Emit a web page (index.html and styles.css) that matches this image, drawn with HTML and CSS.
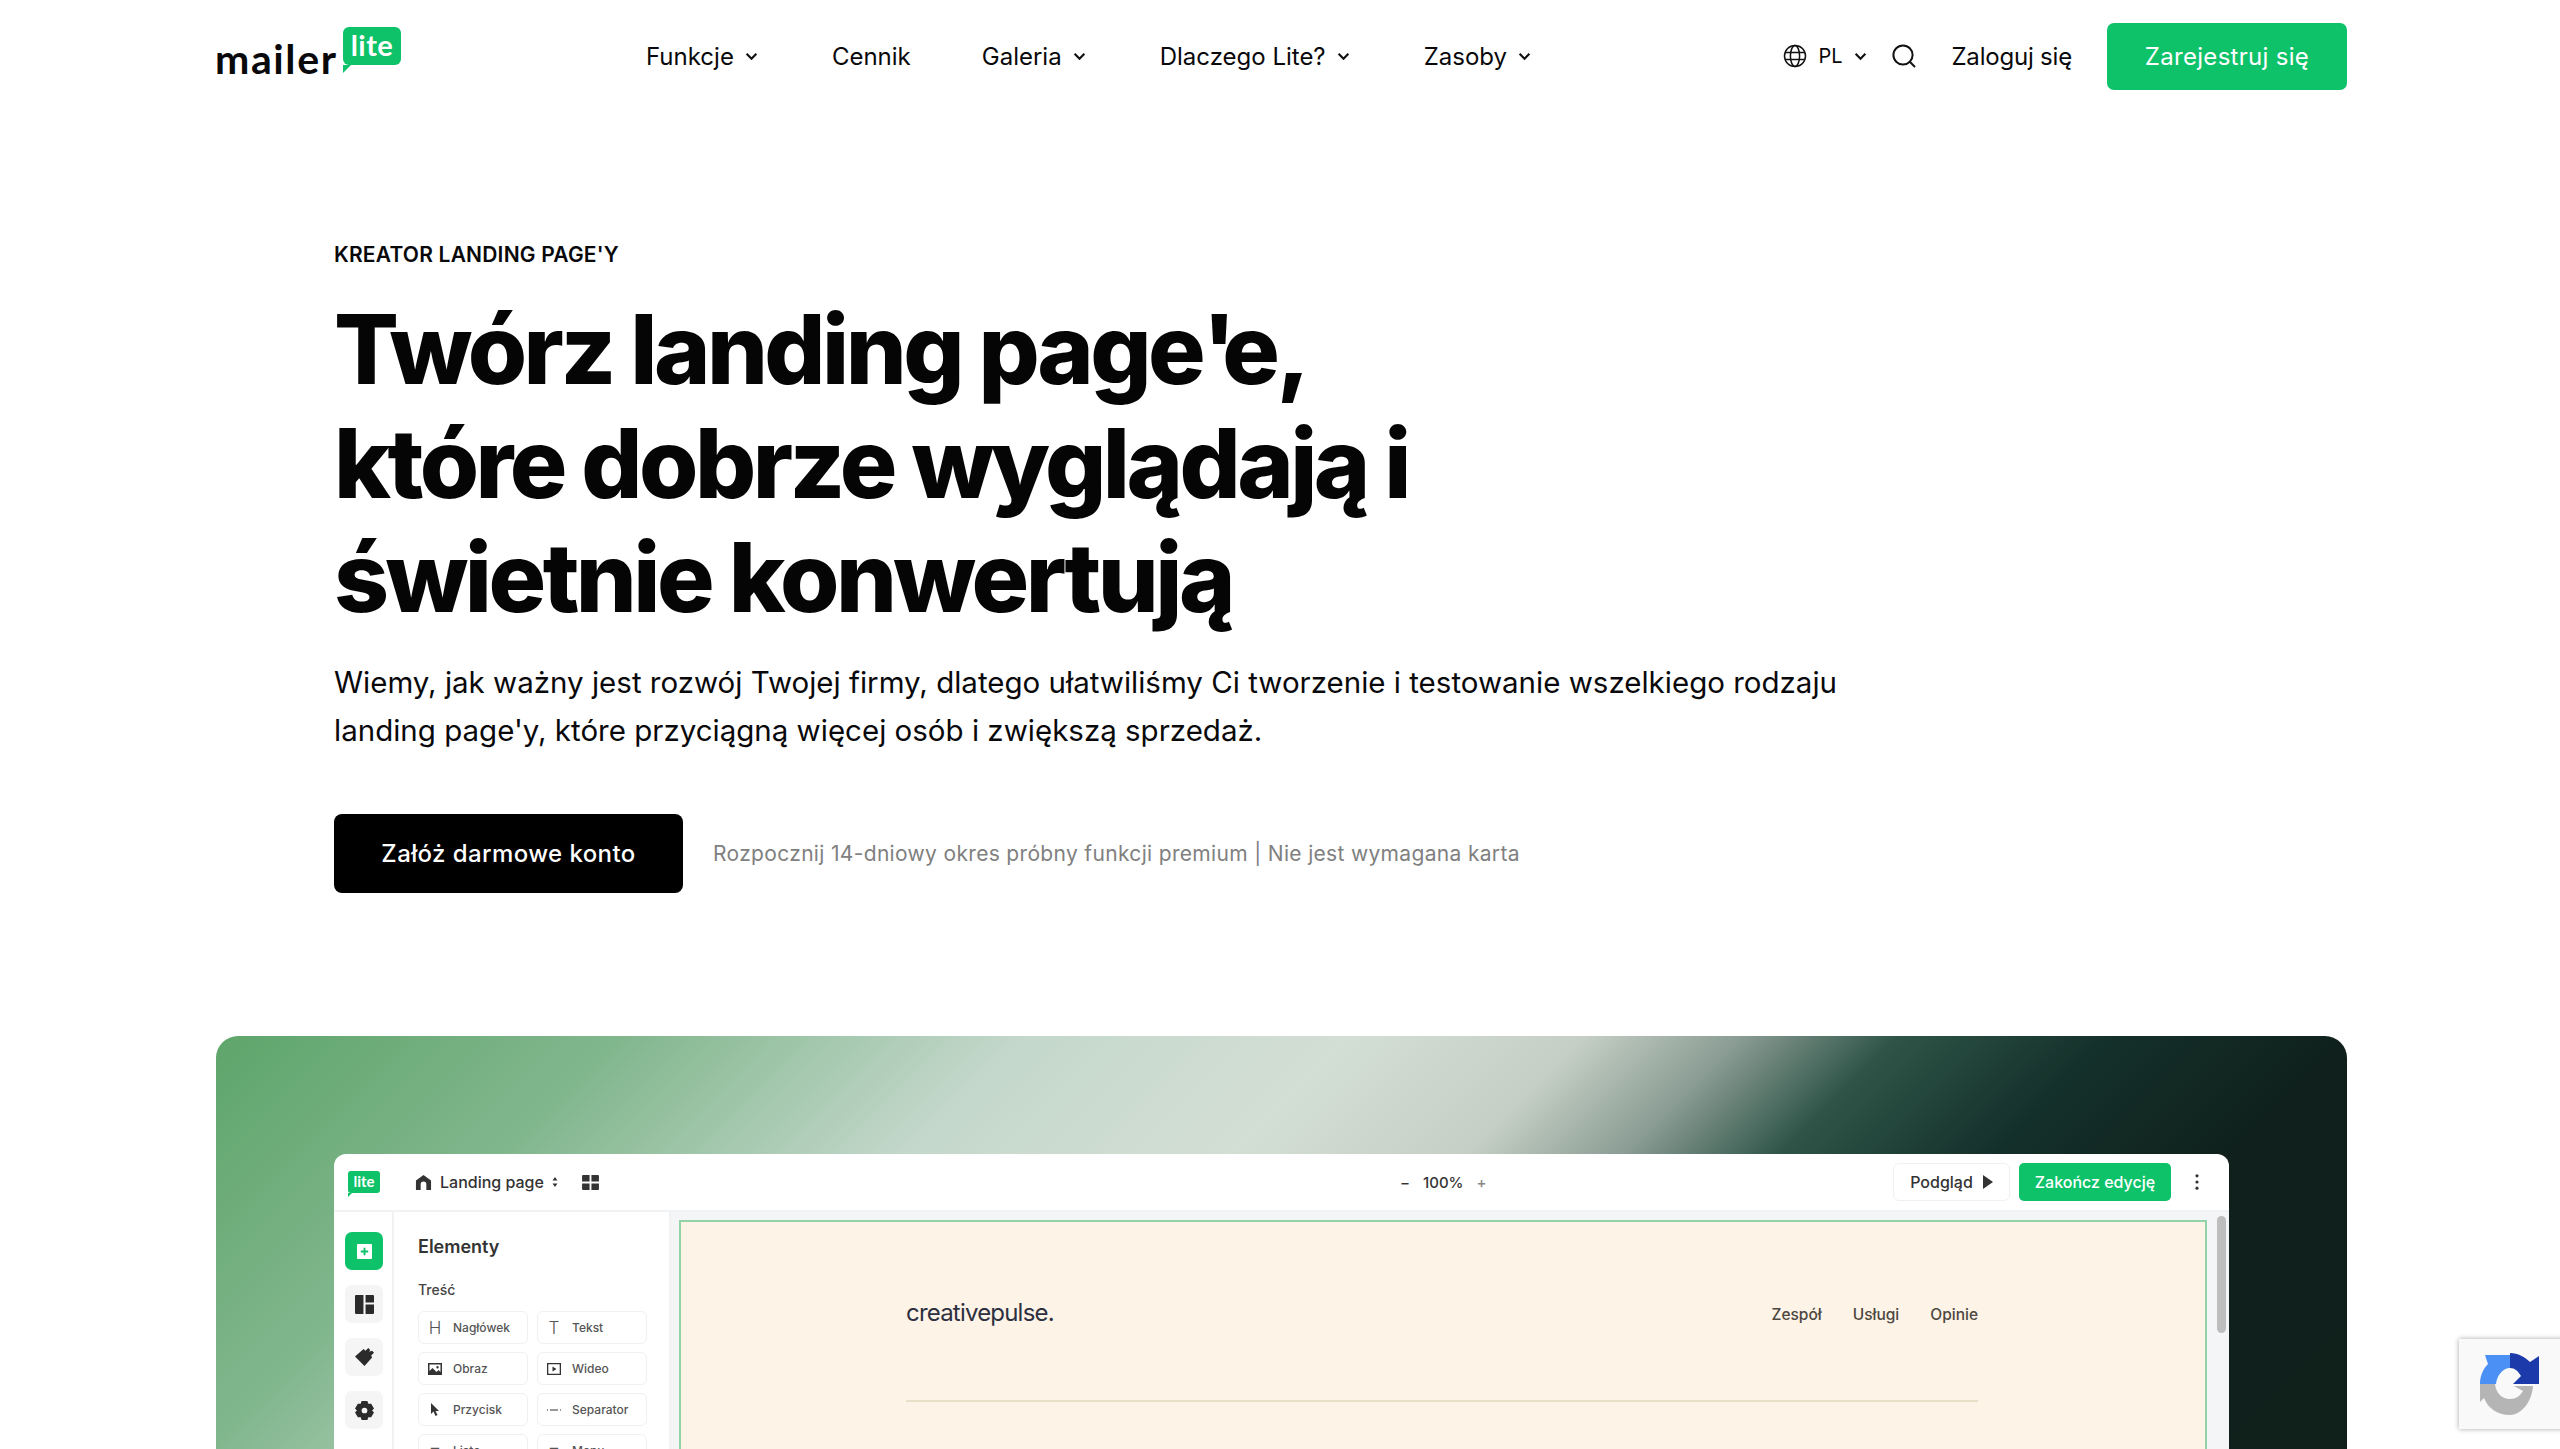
FILE: index.html
```html
<!DOCTYPE html>
<html lang="pl">
<head>
  <meta charset="UTF-8">
  <title>Kreator landing page'y - MailerLite</title>
  <link rel="stylesheet" href="styles.css">
</head>
<body>
  <header class="topbar">
    <a class="logo" href="#">
      <span class="logo-word">mailer</span>
      <span class="logo-bubble">lite</span>
    </a>
    <nav class="main-nav">
      <a class="nav-funkcje" href="#">Funkcje <svg class="chev" viewBox="0 0 12 8"><path d="M1.500 1.500 6 6l4.500-4.500"/></svg></a>
      <a class="nav-cennik" href="#">Cennik</a>
      <a class="nav-galeria" href="#">Galeria <svg class="chev" viewBox="0 0 12 8"><path d="M1.500 1.500 6 6l4.500-4.500"/></svg></a>
      <a class="nav-why" href="#">Dlaczego Lite? <svg class="chev" viewBox="0 0 12 8"><path d="M1.500 1.500 6 6l4.500-4.500"/></svg></a>
      <a href="#">Zasoby <svg class="chev" viewBox="0 0 12 8"><path d="M1.500 1.500 6 6l4.500-4.500"/></svg></a>
    </nav>
    <div class="top-actions">
      <a class="lang" href="#">
        <svg class="globe" viewBox="0 0 24 24"><circle cx="12" cy="12" r="10.500"/><ellipse cx="12" cy="12" rx="4.600" ry="10.500"/><path d="M2 8.500h20M2 15.500h20"/></svg>
        PL
        <svg class="chev" viewBox="0 0 12 8"><path d="M1.500 1.500 6 6l4.500-4.500"/></svg>
      </a>
      <svg class="search" viewBox="0 0 24 24"><circle cx="11" cy="11" r="9.600"/><path d="m18 18 5 5"/></svg>
      <a class="login" href="#">Zaloguj się</a>
      <a class="btn-green" href="#">Zarejestruj się</a>
    </div>
  </header>

  <section class="hero">
    <p class="eyebrow">KREATOR LANDING PAGE'Y</p>
    <h1>Twórz landing page<span class="apos">'</span>e,<br>które dobrze wyglądają i<br>świetnie konwertują</h1>
    <p class="lead">Wiemy, jak ważny jest rozwój Twojej firmy, dlatego ułatwiliśmy Ci tworzenie i testowanie wszelkiego rodzaju<br>landing page'y, które przyciągną więcej osób i zwiększą sprzedaż.</p>
    <div class="cta-row">
      <a class="btn-black" href="#">Załóż darmowe konto</a>
      <span class="cta-note">Rozpocznij 14-dniowy okres próbny funkcji premium | Nie jest wymagana karta</span>
    </div>
  </section>

  <section class="banner">
    <div class="editor">
      <div class="ed-head">
        <div class="ed-left">
          <span class="ed-logo">lite</span>
          <svg class="ed-home" viewBox="0 0 18 18"><path d="M9 1 1 7v10h5v-6a3 3 0 0 1 6 0v6h5V7z"/></svg>
          <span class="ed-title">Landing page</span>
          <svg class="ed-sort" viewBox="0 0 6 12"><path d="M3 1 5.500 4.500h-5zM3 11 .5 7.500h5z"/></svg>
          <svg class="ed-grid" viewBox="0 0 18 16"><path d="M0 1a1 1 0 0 1 1-1h7v7H0zM10 0h7a1 1 0 0 1 1 1v6h-8zM0 9h8v7H1a1 1 0 0 1-1-1zM10 9h8v6a1 1 0 0 1-1 1h-7z"/></svg>
        </div>
        <div class="ed-zoom"><span class="zoom-minus">−</span><span>100%</span><span class="zoom-plus">+</span></div>
        <div class="ed-right">
          <span class="ed-preview">Podgląd <svg viewBox="0 0 10 14"><path d="M0 0 10 7 0 14z"/></svg></span>
          <span class="ed-finish">Zakończ edycję</span>
          <svg class="ed-dots" viewBox="0 0 4 18"><circle cx="2" cy="2" r="1.800"/><circle cx="2" cy="9" r="1.800"/><circle cx="2" cy="16" r="1.800"/></svg>
        </div>
      </div>
      <div class="ed-body">
        <aside class="ed-side">
          <span class="side-btn side-btn-on"><svg viewBox="0 0 16 16"><path fill-rule="evenodd" d="M1 0h14a1 1 0 0 1 1 1v14a1 1 0 0 1-1 1H1a1 1 0 0 1-1-1V1a1 1 0 0 1 1-1zm6 4v3H4v2h3v3h2V9h3V7H9V4z"/></svg></span>
          <span class="side-btn"><svg viewBox="0 0 18 18"><path d="M1 0h7v18H1a1 1 0 0 1-1-1V1a1 1 0 0 1 1-1zM10 0h7a1 1 0 0 1 1 1v6h-8zM10 9h8v8a1 1 0 0 1-1 1h-7z"/></svg></span>
          <span class="side-btn"><svg viewBox="0 0 20 20"><path d="M0 9 9 1l2 2 3-3 2 2-1 2 3-1 2 2-3 3 1 2-8 9z"/></svg></span>
          <span class="side-btn"><svg viewBox="0 0 20 20"><path fill-rule="evenodd" d="M7 0h6l1 3 3 0 3 5-2 2 2 2-3 5h-3l-1 3H7l-1-3H3l-3-5 2-2-2-2 3-5h3zm3 7a3 3 0 1 0 0 6 3 3 0 0 0 0-6z"/></svg></span>
        </aside>
        <div class="ed-panel">
          <h3>Elementy</h3>
          <h4>Treść</h4>
          <div class="el-grid">
            <div class="el-card"><span class="el-ico el-ico-text">H</span>Nagłówek</div>
            <div class="el-card"><span class="el-ico el-ico-text">T</span>Tekst</div>
            <div class="el-card"><svg class="el-ico" viewBox="0 0 14 14"><path fill-rule="evenodd" d="M0 1h14v12H0zm1.500 1.500V9l3-3 4 4 2-2 2 2V2.500zM9.500 4a1.200 1.200 0 1 1 0 2.400 1.200 1.200 0 0 1 0-2.400z"/></svg>Obraz</div>
            <div class="el-card"><svg class="el-ico" viewBox="0 0 14 14"><path fill-rule="evenodd" d="M0 1h14v12H0zm1.300 1.300v9.400h11.400V2.300zM5.500 4.500 9.500 7l-4 2.500z"/></svg>Wideo</div>
            <div class="el-card"><svg class="el-ico el-ico-sm" viewBox="0 0 10 14"><path d="M1 0v11l2.500-2.500L5.500 13 7.500 12 5.500 8H9z"/></svg>Przycisk</div>
            <div class="el-card"><svg class="el-ico" viewBox="0 0 14 14"><path d="M0 6.500h1v1H0zM3 6.500h8v1H3zM13 6.500h1v1h-1z"/></svg>Separator</div>
            <div class="el-card"><span class="el-ico el-ico-text">≡</span>Lista</div>
            <div class="el-card"><span class="el-ico el-ico-text">≡</span>Menu</div>
          </div>
        </div>
        <div class="ed-canvas">
          <div class="frame">
            <div class="frame-head">
              <span class="brand">creativepulse.</span>
              <div class="frame-links"><span>Zespół</span><span>Usługi</span><span>Opinie</span></div>
            </div>
            <div class="frame-line"></div>
          </div>
          <div class="scroll-thumb"></div>
        </div>
      </div>
    </div>
  </section>

  <div class="recaptcha">
    <svg viewBox="0 0 60 62">
      <path fill="#1c3aa9" d="M30 0c8 0 15 4 20 9l9-6v28H33l8-8c-3-5-6-8-11-8z"/>
      <path fill="#4a90f5" d="M30 0v15c-7 0-13 7-14 16H0c0-8 3-15 8-20L5 2h25z"/>
      <path fill="#b5b5b5" d="M0 31h15c1 9 7 15 15 15 6 0 10-3 13-8l-9-5h19c-1 16-12 29-23 29-13 0-22-7-26-17l-4 4z"/>
    </svg>
  </div>
</body>
</html>
```

FILE: styles.css
```css
* {
  margin: 0;
  padding: 0;
  box-sizing: border-box;
}

html, body {
  height: 1449px;
  overflow: hidden;
}

body {
  font-family: 'Inter', sans-serif;
  background-color: #fff;
  color: #09090b;
}

a {
  color: inherit;
  text-decoration: none;
}

.chev {
  width: 13px;
  height: 9px;
  fill: none;
  stroke: #111;
  stroke-width: 2;
}

/* top bar */
.topbar {
  display: flex;
  align-items: center;
  height: 112px;
  padding: 0 213px 0 215px;
}

.logo {
  display: flex;
  align-items: flex-start;
  width: 187px;
  height: 56px;
}

.logo-word {
  font-family: 'Lato', sans-serif;
  font-weight: 700;
  font-size: 41px;
  line-height: 46px;
  letter-spacing: 1.6px;
  margin-top: 8px;
  width: 128px;
}

.logo-bubble {
  position: relative;
  width: 58px;
  height: 38px;
  margin-top: -1px;
  background: #0ec26a;
  border-radius: 6px;
  color: #fff;
  font-family: 'Lato', sans-serif;
  font-weight: 700;
  font-size: 29px;
  line-height: 35px;
  text-align: center;
  letter-spacing: 0.5px;
}

.logo-bubble::after {
  content: "";
  position: absolute;
  left: 0;
  bottom: -8px;
  border-top: 8px solid #0ec26a;
  border-right: 8px solid transparent;
}

.main-nav {
  display: flex;
  align-items: center;
  gap: 74px;
  margin-left: 244px;
  font-size: 24px;
}

.main-nav a {
  display: flex;
  align-items: center;
  gap: 11px;
}

.main-nav .nav-galeria {
  margin-left: -3px;
}

.top-actions {
  display: flex;
  align-items: center;
  margin-left: auto;
  font-size: 24px;
}

.lang {
  display: flex;
  align-items: center;
  gap: 11px;
  font-size: 20px;
}

.lang .chev {
  margin-left: 1px;
}

.globe, .search {
  fill: none;
  stroke: #111;
  width: 24px;
  height: 24px;
}

.globe {
  stroke-width: 1.5;
}

.search {
  stroke-width: 2;
  margin-left: 25px;
}

.login {
  margin-left: 35px;
  letter-spacing: -0.2px;
}

.btn-green {
  margin-left: 35px;
  width: 240px;
  height: 67px;
  line-height: 67px;
  text-align: center;
  background: #0ec26a;
  color: #fff;
  border-radius: 7px;
  letter-spacing: 0.3px;
}

/* hero */
.hero {
  padding: 131px 0 0 334px;
}

.eyebrow {
  font-size: 21px;
  font-weight: 600;
  line-height: 24px;
  letter-spacing: 0.2px;
}

h1 {
  margin-top: 25px;
  font-size: 96px;
  font-weight: 800;
  line-height: 114px;
  letter-spacing: -3.5px;
  color: #050505;
}

/* the apostrophe sits much closer in the original face */
.apos {
  letter-spacing: -14px;
}

.lead {
  margin-top: 24px;
  font-size: 29.5px;
  line-height: 48px;
}

.cta-row {
  display: flex;
  align-items: center;
  gap: 30px;
  margin-top: 60px;
}

.btn-black {
  width: 349px;
  height: 79px;
  line-height: 79px;
  text-align: center;
  background: #000;
  color: #fff;
  border-radius: 8px;
  font-size: 24px;
  font-weight: 500;
  letter-spacing: 0.4px;
}

.cta-note {
  font-size: 21px;
  color: #808080;
  letter-spacing: 0.33px;
}

/* green banner with the editor */
.banner {
  margin: 143px 213px 0 216px;
  height: 500px;
  padding: 118px 118px 0;
  border-radius: 22px 22px 0 0;
  background: linear-gradient(135deg, #5ea56b 0%, #82b78e 15.6%, #c5d8cc 31%, #d3ded5 43%, #c5cfc5 52%, #8a9c94 58%, #2e5447 64%, #14302a 72%, #10211d 81%, #0f1f1a 100%);
}

.editor {
  height: 400px;
  background: #fff;
  border-radius: 12px 12px 0 0;
  overflow: hidden;
}

.ed-head {
  display: flex;
  align-items: center;
  height: 58px;
  border-bottom: 2px solid #f1f2f3;
  color: #333;
  font-size: 16px;
  font-weight: 500;
}

.ed-left {
  display: flex;
  align-items: center;
  width: 336px;
  padding-left: 14px;
}

.ed-logo {
  position: relative;
  width: 32px;
  height: 22px;
  background: #0ec26a;
  border-radius: 3px;
  color: #fff;
  font-family: 'Lato', sans-serif;
  font-weight: 700;
  font-size: 15px;
  line-height: 21px;
  text-align: center;
}

.ed-logo::after {
  content: "";
  position: absolute;
  left: 0;
  bottom: -4px;
  border-top: 4px solid #0ec26a;
  border-right: 4px solid transparent;
}

.ed-home {
  width: 17px;
  height: 17px;
  margin-left: 35px;
  fill: #333;
}

.ed-title {
  margin-left: 8px;
}

.ed-sort {
  width: 6px;
  height: 12px;
  margin-left: 8px;
  fill: #333;
}

.ed-grid {
  width: 17px;
  height: 15px;
  margin-left: 24px;
  fill: #333;
}

.ed-zoom {
  display: flex;
  align-items: center;
  gap: 13px;
  margin-left: 730px;
  font-size: 15px;
}

.zoom-plus {
  color: #888;
}

.ed-right {
  display: flex;
  align-items: center;
  margin-left: auto;
  padding-right: 30px;
  font-size: 16px;
}

.ed-preview {
  display: flex;
  align-items: center;
  justify-content: center;
  gap: 10px;
  width: 117px;
  height: 38px;
  border: 1px solid #f0f0f0;
  border-radius: 6px;
}

.ed-preview svg {
  width: 10px;
  height: 14px;
  fill: #333;
}

.ed-finish {
  margin-left: 9px;
  width: 152px;
  height: 38px;
  line-height: 38px;
  text-align: center;
  background: #0ec26a;
  color: #fff;
  border-radius: 5px;
}

.ed-dots {
  margin-left: 24px;
  width: 4px;
  height: 16px;
  fill: #333;
}

.ed-body {
  display: flex;
  height: 342px;
}

.ed-side {
  display: flex;
  flex-direction: column;
  gap: 15px;
  width: 60px;
  padding: 20px 0 0 11px;
  border-right: 2px solid #f1f2f3;
}

.side-btn {
  display: flex;
  align-items: center;
  justify-content: center;
  flex: none;
  width: 38px;
  height: 38px;
  background: #f5f5f6;
  border-radius: 7px;
}

.side-btn svg {
  width: 19px;
  height: 19px;
  fill: #2b2b2b;
}

.side-btn-on {
  background: #0ec26a;
}

.side-btn-on svg {
  width: 15px;
  height: 15px;
  fill: #fff;
}

.ed-panel {
  width: 277px;
  padding: 21px 0 0 24px;
  border-right: 2px solid #f1f2f3;
}

.ed-panel h3 {
  font-size: 18px;
  font-weight: 600;
  line-height: 28px;
  color: #333;
}

.ed-panel h4 {
  margin-top: 20px;
  font-size: 14px;
  font-weight: 500;
  line-height: 18px;
  color: #444;
}

.el-grid {
  display: grid;
  grid-template-columns: 110px 110px;
  grid-auto-rows: 33px;
  gap: 8px 9px;
  margin-top: 12px;
}

.el-card {
  display: flex;
  align-items: center;
  border: 1px solid #f0f0f0;
  border-radius: 6px;
  font-size: 12px;
  font-weight: 500;
  color: #555;
}

.el-ico {
  flex: none;
  width: 14px;
  height: 14px;
  margin: 0 11px 0 9px;
  fill: #333;
}

.el-ico-sm {
  width: 10px;
  margin: 0 13px 0 11px;
}

.el-ico-text {
  font-size: 17px;
  font-weight: 300;
  line-height: 14px;
  text-align: center;
}

.ed-canvas {
  flex: 1;
  position: relative;
  padding: 8px 22px 0 8px;
  background: #f4f5f6;
}

.frame {
  height: 340px;
  padding: 0 227px 0 225px;
  background: #fdf3e7;
  border: 2px solid #93d3a8;
}

.frame-head {
  display: flex;
  align-items: center;
  justify-content: space-between;
  padding-top: 72px;
  height: 108px;
}

.brand {
  font-size: 24px;
  letter-spacing: -0.8px;
  color: #2d3040;
}

.frame-links {
  display: flex;
  gap: 31px;
  font-size: 15.5px;
  font-weight: 500;
  color: #4c4740;
  margin-top: 4px;
}

.frame-line {
  margin-top: 70px;
  height: 2px;
  background: #e8dfc9;
}

.scroll-thumb {
  position: absolute;
  top: 4px;
  right: 3px;
  width: 9px;
  height: 117px;
  background: #bdbdbd;
  border-radius: 5px;
}

/* captcha badge sits over the page */
.recaptcha {
  position: fixed;
  top: 1339px;
  left: 2459px;
  width: 120px;
  height: 90px;
  padding: 14px 0 0 21px;
  background: #f9f9f9;
  box-shadow: 0 0 5px rgba(0, 0, 0, 0.35);
}

.recaptcha svg {
  display: block;
  width: 60px;
  height: 62px;
}
```
